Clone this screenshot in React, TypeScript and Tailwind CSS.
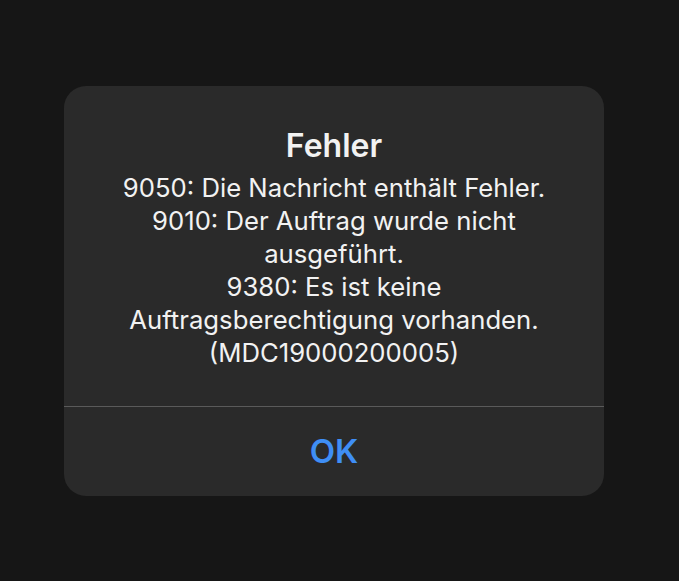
export default function App() {
  const lines = [
    '9050: Die Nachricht enthält Fehler.',
    '9010: Der Auftrag wurde nicht',
    'ausgeführt.',
    '9380: Es ist keine',
    'Auftragsberechtigung vorhanden.',
    '(MDC19000200005)',
  ];

  return (
    <div className="min-h-[581px] w-full bg-[#161616] pt-[86px] pl-[64px] font-['Inter','Noto_Sans',sans-serif]">
      <div className="w-[540px] rounded-[22px] bg-[#2a2a2a] overflow-hidden">
        <div className="px-6 pt-10 pb-[37px] text-center text-[#f2f2f2]">
          <h1 className="text-[32px] leading-[40px] font-semibold">Fehler</h1>
          <div className="mt-[5px] text-[25.7px] leading-[33px]">
            {lines.map((line, i) => (
              <div key={i}>{line}</div>
            ))}
          </div>
        </div>
        <div className="h-px bg-[#5a5a5a]" />
        <button className="w-full h-[89px] flex items-center justify-center text-[33px] font-semibold text-[#3f8ef5]">
          OK
        </button>
      </div>
    </div>
  );
}
